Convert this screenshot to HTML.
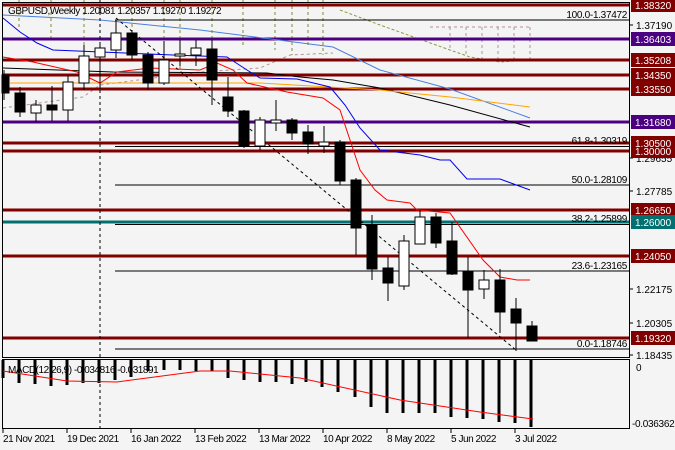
<!DOCTYPE html><html><head><style>body{margin:0;background:#f4f4f4}svg{display:block}text{font-family:"Liberation Sans",sans-serif;font-size:10px}.t{letter-spacing:-0.45px}.f{letter-spacing:-0.3px}</style></head><body>
<svg width="675" height="450" xmlns="http://www.w3.org/2000/svg">
<rect width="675" height="450" fill="#f4f4f4"/>
<g stroke="#7a8a3a" stroke-dasharray="3,3" stroke-width="1">
<line x1="19" y1="0" x2="19" y2="30"/><line x1="51" y1="0" x2="51" y2="40"/><line x1="84" y1="0" x2="84" y2="55"/><line x1="132" y1="0" x2="132" y2="50"/><line x1="164" y1="0" x2="164" y2="45"/><line x1="180" y1="0" x2="180" y2="70"/><line x1="212" y1="0" x2="212" y2="45"/><line x1="243" y1="0" x2="243" y2="45"/><line x1="275" y1="0" x2="275" y2="50"/><line x1="292" y1="0" x2="292" y2="55"/><line x1="308" y1="0" x2="308" y2="45"/><line x1="323" y1="0" x2="323" y2="55"/></g>
<g stroke="#b89090" stroke-dasharray="3,3" fill="none"><line x1="450" y1="27" x2="450" y2="50"/><line x1="466" y1="27" x2="466" y2="55"/><line x1="482" y1="27" x2="482" y2="60"/><line x1="498" y1="27" x2="498" y2="62"/><line x1="514" y1="27" x2="514" y2="62"/><line x1="530" y1="27" x2="530" y2="62"/><polyline points="3,108 83,97 100,85 200,72 260,68 290,55 333,53"/><line x1="430" y1="27" x2="530" y2="27"/></g>
<polyline fill="none" stroke="#8a9a40" stroke-dasharray="3,2" points="340,10 380,25 450,50 470,57 500,62 530,60"/>
<g stroke="#800000" stroke-width="3">
<line x1="2" y1="5" x2="629" y2="5"/><line x1="2" y1="60" x2="629" y2="60"/><line x1="2" y1="75" x2="629" y2="75"/><line x1="2" y1="89" x2="629" y2="89"/><line x1="2" y1="143" x2="629" y2="143"/><line x1="2" y1="151" x2="629" y2="151"/><line x1="2" y1="210" x2="629" y2="210"/><line x1="2" y1="256" x2="629" y2="256"/><line x1="2" y1="338" x2="629" y2="338"/></g>
<g stroke="#4b0082" stroke-width="3"><line x1="2" y1="39" x2="629" y2="39"/><line x1="2" y1="122" x2="629" y2="122"/></g>
<line x1="2" y1="222" x2="629" y2="222" stroke="#007070" stroke-width="3"/>
<g stroke="#000" stroke-width="1"><line x1="115" y1="20" x2="629" y2="20"/><line x1="115" y1="146.5" x2="629" y2="146.5"/><line x1="115" y1="185" x2="629" y2="185"/><line x1="115" y1="224.5" x2="629" y2="224.5"/><line x1="115" y1="271" x2="629" y2="271"/><line x1="115" y1="349" x2="629" y2="349"/></g>
<g fill="#000" text-anchor="end" class="f"><text x="627" y="18">100.0-1.37472</text><text x="627" y="144">61.8-1.30319</text><text x="627" y="183">50.0-1.28109</text><text x="627" y="222">38.2-1.25899</text><text x="627" y="269">23.6-1.23165</text><text x="627" y="347">0.0-1.18746</text></g>
<polyline fill="none" stroke="#4a7fe0" points="3,15 100,20 200,30 333,47 380,70 450,89 530,118"/>
<polyline fill="none" stroke="#000" points="3,68 113,72 267,73 300,77 333,80 380,88 450,105 530,127"/>
<polyline fill="none" stroke="#ffa500" points="10,83 260,83 380,90 450,97 530,107"/>
<polyline fill="none" stroke="#0000ee" points="3,18 20,32 37,43 53,50 173,55 227,57 247,70 260,78 297,79 330,87 345,105 360,128 380,150 420,155 440,160 450,160 467,179 500,179 530,190"/>
<polyline fill="none" stroke="#ff0000" points="3,57 33,62 77,72 100,83 117,72 150,68 200,70 217,63 233,70 247,83 287,92 323,98 340,110 350,140 360,170 375,190 387,200 410,203 417,210 450,213 483,260 500,277 517,280 530,280"/>
<line x1="116" y1="18" x2="516" y2="350" stroke="#000" stroke-dasharray="3,3"/>
<line x1="100" y1="0" x2="100" y2="430" stroke="#000" stroke-dasharray="3,3"/>
<g stroke="#000" stroke-width="1">
<line x1="20" y1="87" x2="20" y2="117"/><rect x="15" y="93" width="10" height="19" fill="#000"/>
<line x1="4" y1="70" x2="4" y2="100"/><rect x="2" y="75" width="7" height="18" fill="#000"/>
<line x1="36" y1="100" x2="36" y2="122"/><rect x="31" y="105" width="10" height="8" fill="#fff"/>
<line x1="52" y1="86" x2="52" y2="121"/><rect x="47" y="105" width="10" height="5" fill="#000"/>
<line x1="68" y1="75" x2="68" y2="121"/><rect x="63" y="82" width="10" height="28" fill="#fff"/>
<line x1="84" y1="45" x2="84" y2="90"/><rect x="79" y="56" width="10" height="27" fill="#fff"/>
<line x1="100" y1="44" x2="100" y2="89"/><rect x="95" y="48" width="10" height="9" fill="#fff"/>
<line x1="116" y1="20" x2="116" y2="58"/><rect x="111" y="33" width="10" height="17" fill="#fff"/>
<line x1="132" y1="30" x2="132" y2="60"/><rect x="127" y="33" width="10" height="22" fill="#000"/>
<line x1="148" y1="52" x2="148" y2="90"/><rect x="143" y="55" width="10" height="28" fill="#000"/>
<line x1="164" y1="41" x2="164" y2="85"/><rect x="159" y="60" width="10" height="23" fill="#fff"/>
<line x1="180" y1="40" x2="180" y2="66"/><rect x="175" y="54" width="10" height="2" fill="#fff"/>
<line x1="196" y1="40" x2="196" y2="66"/><rect x="191" y="48" width="10" height="7" fill="#fff"/>
<line x1="212" y1="40" x2="212" y2="105"/><rect x="207" y="49" width="10" height="31" fill="#000"/>
<line x1="228" y1="77" x2="228" y2="117"/><rect x="223" y="97" width="10" height="14" fill="#000"/>
<line x1="244" y1="110" x2="244" y2="148"/><rect x="239" y="111" width="10" height="35" fill="#000"/>
<line x1="260" y1="117" x2="260" y2="150"/><rect x="255" y="120" width="10" height="26" fill="#fff"/>
<line x1="276" y1="100" x2="276" y2="131"/><rect x="271" y="120" width="10" height="3" fill="#fff"/>
<line x1="292" y1="118" x2="292" y2="140"/><rect x="287" y="120" width="10" height="13" fill="#000"/>
<line x1="308" y1="125" x2="308" y2="154"/><rect x="303" y="132" width="10" height="12" fill="#000"/>
<line x1="324" y1="126" x2="324" y2="153"/><rect x="319" y="142" width="10" height="4" fill="#fff"/>
<line x1="340" y1="140" x2="340" y2="185"/><rect x="335" y="142" width="10" height="39" fill="#000"/>
<line x1="356" y1="178" x2="356" y2="255"/><rect x="351" y="180" width="10" height="48" fill="#000"/>
<line x1="372" y1="215" x2="372" y2="280"/><rect x="367" y="225" width="10" height="44" fill="#000"/>
<line x1="388" y1="257" x2="388" y2="301"/><rect x="383" y="268" width="10" height="15" fill="#000"/>
<line x1="404" y1="235" x2="404" y2="290"/><rect x="399" y="241" width="10" height="45" fill="#fff"/>
<line x1="420" y1="210" x2="420" y2="244"/><rect x="415" y="217" width="10" height="27" fill="#fff"/>
<line x1="436" y1="213" x2="436" y2="248"/><rect x="431" y="217" width="10" height="26" fill="#000"/>
<line x1="452" y1="222" x2="452" y2="275"/><rect x="447" y="241" width="10" height="33" fill="#000"/>
<line x1="468" y1="257" x2="468" y2="338"/><rect x="463" y="271" width="10" height="19" fill="#000"/>
<line x1="484" y1="270" x2="484" y2="299"/><rect x="479" y="280" width="10" height="9" fill="#fff"/>
<line x1="500" y1="269" x2="500" y2="333"/><rect x="495" y="280" width="10" height="32" fill="#000"/>
<line x1="516" y1="298" x2="516" y2="351"/><rect x="511" y="309" width="10" height="14" fill="#000"/>
<line x1="532" y1="321" x2="532" y2="341"/><rect x="527" y="326" width="10" height="15" fill="#000"/>
</g>
<rect x="2.5" y="2.5" width="627" height="355" fill="none" stroke="#000"/>
<rect x="2.5" y="359.5" width="627" height="69" fill="none" stroke="#000"/>
<g stroke="#000" stroke-width="3">
<line x1="3" y1="360" x2="3" y2="378"/><line x1="19" y1="360" x2="19" y2="383"/><line x1="35" y1="360" x2="35" y2="384"/><line x1="51" y1="360" x2="51" y2="386"/><line x1="67" y1="360" x2="67" y2="385"/><line x1="83" y1="360" x2="83" y2="383"/><line x1="99" y1="360" x2="99" y2="383"/><line x1="115" y1="360" x2="115" y2="380"/><line x1="131" y1="360" x2="131" y2="377"/><line x1="148" y1="360" x2="148" y2="371"/><line x1="164" y1="360" x2="164" y2="370"/><line x1="180" y1="360" x2="180" y2="370"/><line x1="196" y1="360" x2="196" y2="371"/><line x1="212" y1="360" x2="212" y2="371"/><line x1="228" y1="360" x2="228" y2="378"/><line x1="244" y1="360" x2="244" y2="380"/><line x1="260" y1="360" x2="260" y2="382"/><line x1="276" y1="360" x2="276" y2="382"/><line x1="292" y1="360" x2="292" y2="384"/><line x1="306" y1="360" x2="306" y2="382"/><line x1="322" y1="360" x2="322" y2="387"/><line x1="338" y1="360" x2="338" y2="392"/><line x1="355" y1="360" x2="355" y2="397"/><line x1="371" y1="360" x2="371" y2="407"/><line x1="387" y1="360" x2="387" y2="413"/><line x1="403" y1="360" x2="403" y2="413"/><line x1="419" y1="360" x2="419" y2="413"/><line x1="435" y1="360" x2="435" y2="413"/><line x1="451" y1="360" x2="451" y2="417"/><line x1="467" y1="360" x2="467" y2="418"/><line x1="483" y1="360" x2="483" y2="419"/><line x1="499" y1="360" x2="499" y2="422"/><line x1="515" y1="360" x2="515" y2="423"/><line x1="531" y1="360" x2="531" y2="427"/></g>
<polyline fill="none" stroke="#ff0000" points="3,371 67,381 117,382 200,371 230,371 260,374 300,378 400,400 480,412 533,419"/>
<text x="8" y="373" fill="#000" class="t">MACD(12,26,9) -0.034816 -0.031891</text>
<text x="8" y="14" fill="#000" class="t">GBPUSD,Weekly  1.20081 1.20357 1.19270 1.19272</text>
<g stroke="#000"><line x1="630" y1="25" x2="633" y2="25"/><line x1="630" y1="158" x2="633" y2="158"/><line x1="630" y1="191" x2="633" y2="191"/><line x1="630" y1="289" x2="633" y2="289"/><line x1="630" y1="323" x2="633" y2="323"/><line x1="630" y1="355" x2="633" y2="355"/>
<line x1="3" y1="429" x2="3" y2="433"/><line x1="67" y1="429" x2="67" y2="433"/><line x1="131" y1="429" x2="131" y2="433"/><line x1="195" y1="429" x2="195" y2="433"/><line x1="259" y1="429" x2="259" y2="433"/><line x1="323" y1="429" x2="323" y2="433"/><line x1="387" y1="429" x2="387" y2="433"/><line x1="451" y1="429" x2="451" y2="433"/><line x1="515" y1="429" x2="515" y2="433"/></g>
<g fill="#000"><text x="636" y="29">1.37190</text><text x="636" y="162">1.29655</text><text x="636" y="195">1.27785</text><text x="636" y="293">1.22175</text><text x="636" y="327">1.20305</text><text x="636" y="359">1.18435</text><text x="636" y="371">0</text><text x="632" y="427" class="f">-0.036362</text></g>
<g fill="#000" class="t"><text x="3" y="442">21 Nov 2021</text><text x="67" y="442">19 Dec 2021</text><text x="131" y="442">16 Jan 2022</text><text x="195" y="442">13 Feb 2022</text><text x="259" y="442">13 Mar 2022</text><text x="323" y="442">10 Apr 2022</text><text x="387" y="442">8 May 2022</text><text x="451" y="442">5 Jun 2022</text><text x="515" y="442">3 Jul 2022</text></g>
<g fill="#800000"><rect x="631" y="-2" width="44" height="14"/><rect x="631" y="53" width="44" height="14"/><rect x="631" y="68" width="44" height="14"/><rect x="631" y="82" width="44" height="14"/><rect x="631" y="136" width="44" height="14"/><rect x="631" y="144" width="44" height="14"/><rect x="631" y="203" width="44" height="14"/><rect x="631" y="249" width="44" height="14"/><rect x="631" y="331" width="44" height="14"/></g>
<g fill="#4b0082"><rect x="631" y="32" width="44" height="14"/><rect x="631" y="115" width="44" height="14"/></g>
<rect x="631" y="215" width="44" height="14" fill="#007070"/>
<g fill="#fff"><text x="635" y="9">1.38320</text><text x="635" y="43">1.36403</text><text x="635" y="64">1.35208</text><text x="635" y="79">1.34350</text><text x="635" y="93">1.33550</text><text x="635" y="126">1.31680</text><text x="635" y="147">1.30500</text><text x="635" y="155">1.30000</text><text x="635" y="214">1.26650</text><text x="635" y="226">1.26000</text><text x="635" y="260">1.24050</text><text x="635" y="342">1.19320</text></g>
</svg></body></html>
